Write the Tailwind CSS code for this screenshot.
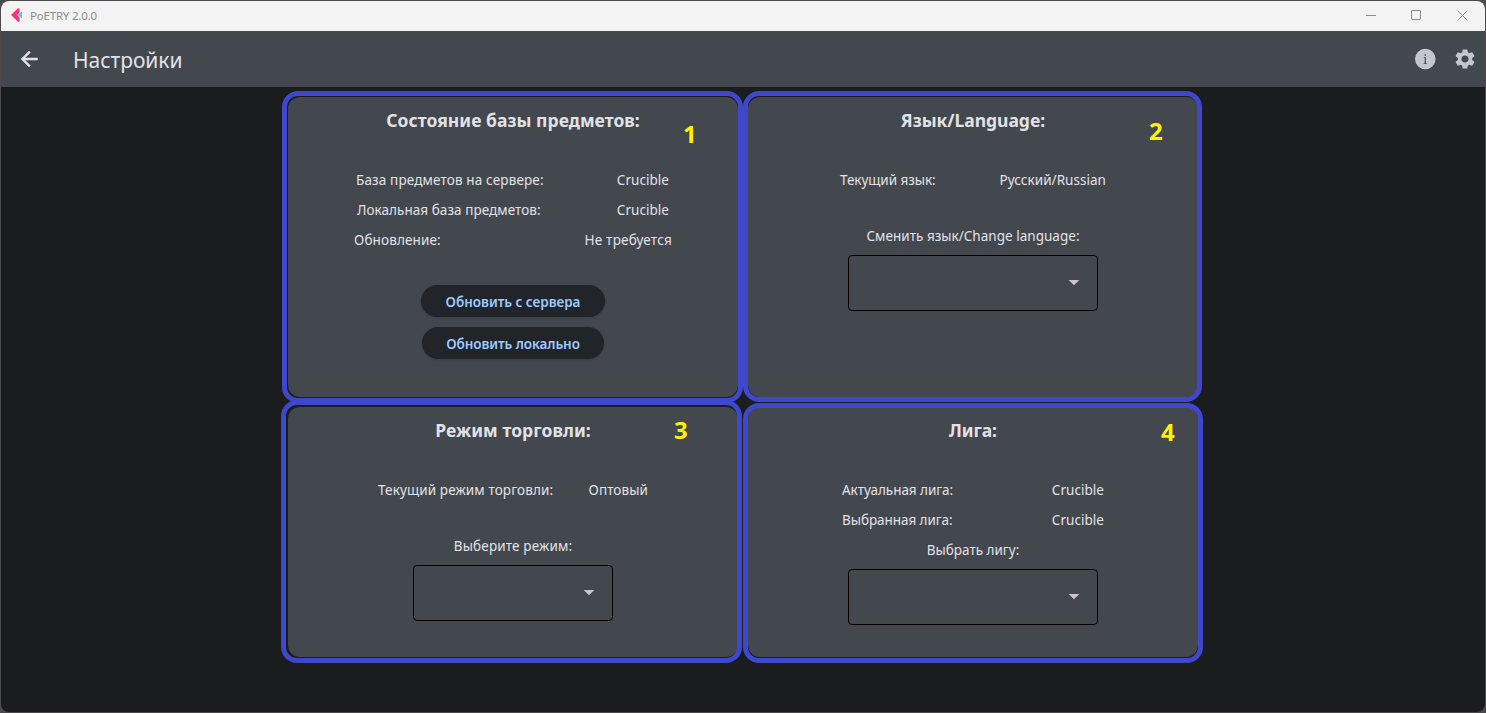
<!DOCTYPE html>
<html lang="ru">
<head>
<meta charset="utf-8">
<title>PoETRY 2.0.0</title>
<script src="https://cdn.jsdelivr.net/npm/@tailwindcss/browser@4"></script>
</head>
<body class="relative h-[713px] w-[1486px] overflow-hidden bg-[#4b494c] p-px font-['Noto_Sans',sans-serif] text-[13.5px] text-[#e2e2e6]">
<div class="flex h-full flex-col overflow-hidden rounded-lg bg-[#1b1c1e]">

  <!-- Title bar -->
  <header class="flex h-[30px] shrink-0 items-center bg-[#f3f3f3] pl-2.5 text-[#8b8b8b]">
    <svg class="mb-[2px] h-4 w-3" viewBox="0 0 12 16"><path fill="#54c5f8" d="M6 8l5-3.500v7z"/><path fill="#f6356f" d="M0 8L7 1.200l1.500.2v4L6.200 8l2.300 2.600v4l-1.500.2z"/></svg>
    <span class="ml-[7px] text-[11.5px] tracking-[-0.198px]">PoETRY 2.0.0</span>
    <div class="ml-auto flex items-center pr-[17px] pb-[2px]">
      <svg class="mr-[34px] h-[11px] w-[11px]" viewBox="0 0 11 11" stroke="#8b8b8b"><path d="M0 5.500h10"/></svg>
      <svg class="mr-[35px] h-[11px] w-[11px]" viewBox="0 0 11 11" fill="none" stroke="#8b8b8b"><rect x=".5" y=".5" width="9" height="9" rx=".5"/></svg>
      <svg class="h-[11px] w-[11px]" viewBox="0 0 11 11" stroke="#8b8b8b"><path d="M.5.5l10 10M10.500.5l-10 10"/></svg>
    </div>
  </header>

  <!-- App bar -->
  <nav class="flex h-14 shrink-0 items-center bg-[#43474e] pl-4 pr-2">
    <svg class="h-6 w-6" viewBox="0 0 24 24" fill="#e2e2e6" stroke="#e2e2e6" stroke-width=".5"><path d="M20.500 11H7.830l5.590-5.590L12 4l-8 8 8 8 1.410-1.410L7.830 13H20.500v-2z"/></svg>
    <h1 class="ml-8 pt-[2px] text-[21px] leading-7 tracking-[-0.05px]">Настройки</h1>
    <div class="ml-auto flex items-center gap-4">
      <svg class="h-6 w-6" viewBox="0 0 24 24"><circle cx="12.300" cy="12" r="10.300" fill="#c3c6cf"/><path fill="#43474e" d="M11.600 7.200h1.300v1.500h-1.300zM10.800 10.200h2.100v6h.9v.8h-3.100v-.8h1v-5.200h-.9z"/></svg>
      <svg class="h-6 w-6" viewBox="0 0 24 24" fill="#c3c6cf"><path d="M19.140 12.940c.04-.3.060-.61.060-.94 0-.32-.02-.64-.07-.94l2.030-1.580c.18-.14.23-.41.120-.61l-1.920-3.320c-.12-.22-.37-.29-.59-.22l-2.390.96c-.5-.38-1.030-.7-1.620-.94l-.36-2.540c-.04-.24-.24-.41-.48-.41h-3.840c-.24 0-.43.17-.47.41l-.36 2.540c-.59.24-1.130.57-1.620.94l-2.390-.96c-.22-.08-.47 0-.59.22L2.740 8.870c-.12.21-.08.47.12.61l2.030 1.580c-.05.3-.09.63-.09.940s.02.64.07.940l-2.030 1.580c-.18.14-.23.41-.12.61l1.920 3.320c.12.22.37.29.59.22l2.390-.96c.5.38 1.030.7 1.620.940l.36 2.540c.05.24.24.41.480.41h3.840c.24 0 .44-.17.470-.41l.36-2.540c.59-.24 1.130-.56 1.620-.94l2.390.960c.22.080.47 0 .59-.22l1.920-3.320c.12-.22.070-.47-.12-.61l-2.010-1.580zM12 15.600c-1.980 0-3.600-1.620-3.600-3.600s1.620-3.600 3.600-3.600 3.600 1.620 3.600 3.600-1.620 3.600-3.600 3.600z"/></svg>
    </div>
  </nav>

  <!-- Settings cards -->
  <main class="ml-[287px] mt-2.5 grid w-[910px] grid-cols-2 grid-rows-[300px_250px] gap-2.5 leading-[30px] whitespace-nowrap">

    <section class="flex flex-col items-center rounded-xl bg-[#43474e] pt-[11px]">
      <h2 class="mb-[33px] text-[17.5px] leading-6 font-bold tracking-[0.042px]">Состояние базы предметов:</h2>
      <div class="flex w-full justify-between pl-[68px] pr-[69px]"><span class="tracking-[0.140px]">База предметов на сервере:</span><span class="tracking-[0.043px]">Crucible</span></div>
      <div class="flex w-full justify-between pl-[69px] pr-[69px]"><span class="tracking-[0.053px]">Локальная база предметов:</span><span class="tracking-[0.043px]">Crucible</span></div>
      <div class="flex w-full justify-between pl-[66px] pr-[66px]"><span class="tracking-[0.127px]">Обновление:</span><span class="tracking-[0.230px]">Не требуется</span></div>
      <button class="mt-[30px] h-8 w-[184px] rounded-full bg-[#212428] pt-[2px] leading-[30px] font-semibold tracking-[-0.034px] text-[#9ecaff] shadow-sm">Обновить с сервера</button>
      <button class="mt-2.5 h-8 w-[182px] rounded-full bg-[#212428] pt-[2px] leading-[30px] font-semibold tracking-[-0.076px] text-[#9ecaff] shadow-sm">Обновить локально</button>
    </section>

    <section class="flex flex-col items-center rounded-xl bg-[#43474e] pt-[11px]">
      <h2 class="mb-[33px] text-[17.5px] leading-6 font-bold tracking-[-0.037px]">Язык/Language:</h2>
      <div class="flex w-full justify-between pl-[92px] pr-[92px]"><span class="tracking-[-0.052px]">Текущий язык:</span><span class="tracking-[0.036px]">Русский/Russian</span></div>
      <div class="mt-[26px] tracking-[0.024px]">Сменить язык/Change language:</div>
      <div class="mt-1 flex h-14 w-[250px] items-start justify-end rounded border border-black pt-3.5 pr-[11px]"><svg class="h-6 w-6" viewBox="0 0 24 24" fill="#c8c8ca"><path d="M6.700 10l5.300 5.300 5.300-5.300z"/></svg></div>
    </section>

    <section class="flex flex-col items-center rounded-xl bg-[#43474e] pt-[11px]">
      <h2 class="mb-[33px] text-[17.5px] leading-6 font-bold tracking-[0.080px]">Режим торговли:</h2>
      <div class="flex w-full justify-between pl-[90px] pr-[90px]"><span class="tracking-[0.123px]">Текущий режим торговли:</span><span class="tracking-[0.087px]">Оптовый</span></div>
      <div class="mt-[26px] tracking-[0.150px]">Выберите режим:</div>
      <div class="mt-1 flex h-14 w-[200px] items-start justify-end rounded border border-black pt-3.5 pr-[11px]"><svg class="h-6 w-6" viewBox="0 0 24 24" fill="#c8c8ca"><path d="M6.700 10l5.300 5.300 5.300-5.300z"/></svg></div>
    </section>

    <section class="flex flex-col items-center rounded-xl bg-[#43474e] pt-[11px]">
      <h2 class="mb-[33px] text-[17.5px] leading-6 font-bold tracking-[-0.091px]">Лига:</h2>
      <div class="flex w-full justify-between pl-[94px] pr-[94px]"><span class="tracking-[-0.060px]">Актуальная лига:</span><span class="tracking-[0.043px]">Crucible</span></div>
      <div class="flex w-full justify-between pl-[94px] pr-[94px]"><span class="tracking-[-0.060px]">Выбранная лига:</span><span class="tracking-[0.043px]">Crucible</span></div>
      <div class="tracking-[0.009px]">Выбрать лигу:</div>
      <div class="mt-1 flex h-14 w-[250px] items-start justify-end rounded border border-black pt-3.5 pr-[11px]"><svg class="h-6 w-6" viewBox="0 0 24 24" fill="#c8c8ca"><path d="M6.700 10l5.300 5.300 5.300-5.300z"/></svg></div>
    </section>
  </main>
</div>

<!-- Numbered annotation frames over the cards -->
<div class="absolute top-[91px] left-[282px] h-[312px] w-[461px] rounded-[16px] border-5 border-[#3f48cc]"></div>
<div class="absolute top-[91px] left-[743px] h-[311px] w-[459px] rounded-[16px] border-5 border-[#3f48cc]"></div>
<div class="absolute top-[400px] left-[281px] h-[263px] w-[461px] rounded-[16px] border-5 border-[#3f48cc]"></div>
<div class="absolute top-[403px] left-[743px] h-[260px] w-[460px] rounded-[16px] border-5 border-[#3f48cc]"></div>
<div class="absolute top-[122px] left-[683px] text-2xl/6 font-bold text-[#fff200]">1</div>
<div class="absolute top-[119px] left-[1149px] text-2xl/6 font-bold text-[#fff200]">2</div>
<div class="absolute top-[418px] left-[674px] text-2xl/6 font-bold text-[#fff200]">3</div>
<div class="absolute top-[420px] left-[1161px] text-2xl/6 font-bold text-[#fff200]">4</div>
</body>
</html>
